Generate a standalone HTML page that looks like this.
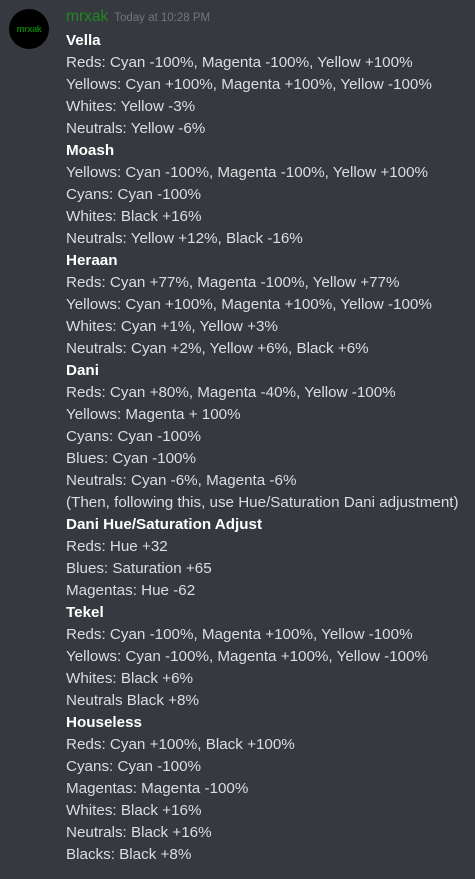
<!DOCTYPE html>
<html><head><meta charset="utf-8"><style>
body{margin:0;background:#36393f;width:475px;height:879px;overflow:hidden;font-family:"Liberation Sans",sans-serif;}
.av{position:absolute;left:9px;top:9px;width:40px;height:40px;border-radius:50%;background:#000;color:#0a7a0a;font-size:9px;font-weight:bold;text-align:center;line-height:40px;letter-spacing:-0.3px}
.hd{position:absolute;left:66px;top:8px;white-space:nowrap}
.nm{color:#1e8a1e;font-size:15.5px}
.ts{color:#72767d;font-size:11.5px;margin-left:6px}
.c{position:absolute;left:66px;top:30px;color:#dcddde;font-size:15.2px;line-height:22px;white-space:nowrap}
b{color:#fff}
</style></head><body>
<div class="av">mrxak</div>
<div class="hd"><span class="nm">mrxak</span><span class="ts">Today at 10:28 PM</span></div>
<div class="c">
<b>Vella</b><br>
Reds: Cyan -100%, Magenta -100%, Yellow +100%<br>
Yellows: Cyan +100%, Magenta +100%, Yellow -100%<br>
Whites: Yellow -3%<br>
Neutrals: Yellow -6%<br>
<b>Moash</b><br>
Yellows: Cyan -100%, Magenta -100%, Yellow +100%<br>
Cyans: Cyan -100%<br>
Whites: Black +16%<br>
Neutrals: Yellow +12%, Black -16%<br>
<b>Heraan</b><br>
Reds: Cyan +77%, Magenta -100%, Yellow +77%<br>
Yellows: Cyan +100%, Magenta +100%, Yellow -100%<br>
Whites: Cyan +1%, Yellow +3%<br>
Neutrals: Cyan +2%, Yellow +6%, Black +6%<br>
<b>Dani</b><br>
Reds: Cyan +80%, Magenta -40%, Yellow -100%<br>
Yellows: Magenta + 100%<br>
Cyans: Cyan -100%<br>
Blues: Cyan -100%<br>
Neutrals: Cyan -6%, Magenta -6%<br>
(Then, following this, use Hue/Saturation Dani adjustment)<br>
<b>Dani Hue/Saturation Adjust</b><br>
Reds: Hue +32<br>
Blues: Saturation +65<br>
Magentas: Hue -62<br>
<b>Tekel</b><br>
Reds: Cyan -100%, Magenta +100%, Yellow -100%<br>
Yellows: Cyan -100%, Magenta +100%, Yellow -100%<br>
Whites: Black +6%<br>
Neutrals Black +8%<br>
<b>Houseless</b><br>
Reds: Cyan +100%, Black +100%<br>
Cyans: Cyan -100%<br>
Magentas: Magenta -100%<br>
Whites: Black +16%<br>
Neutrals: Black +16%<br>
Blacks: Black +8%
</div>
</body></html>
